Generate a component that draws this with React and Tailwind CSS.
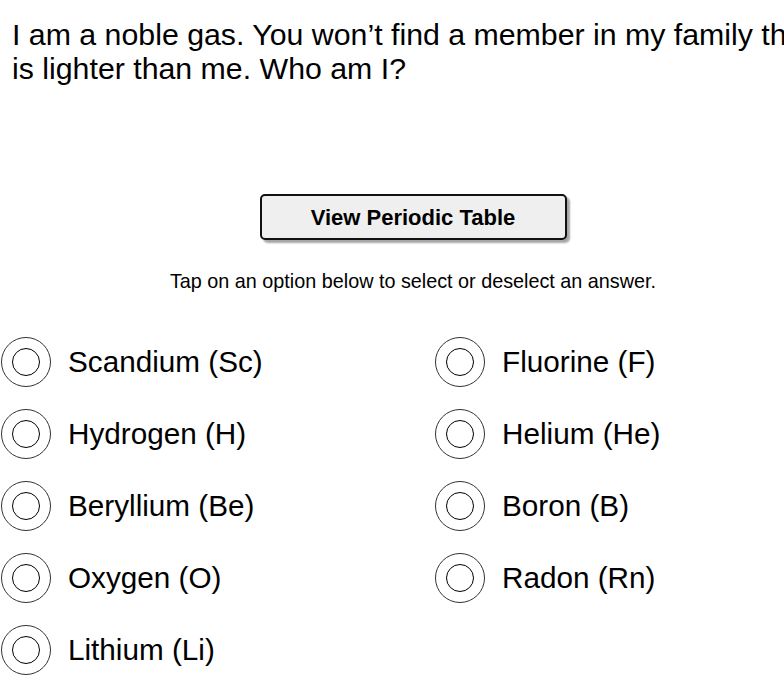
export default function App() {
  const left = ["Scandium (Sc)", "Hydrogen (H)", "Beryllium (Be)", "Oxygen (O)", "Lithium (Li)"];
  const right = ["Fluorine (F)", "Helium (He)", "Boron (B)", "Radon (Rn)"];
  const Option = ({ label }) => (
    <div className="flex items-center h-[72px]">
      <div className="w-[50px] h-[50px] rounded-full border border-[#333] flex items-center justify-center shrink-0 ml-px">
        <div className="w-[28px] h-[28px] rounded-full border-[1.5px] border-black" />
      </div>
      <span className="ml-[17px] text-[29.7px] leading-none text-black">{label}</span>
    </div>
  );
  return (
    <div className="w-[784px] h-[687px] overflow-hidden bg-white" style={{ fontFamily: '"Liberation Sans", Arial, sans-serif' }}>
      <div className="w-[880px]">
        <p className="pl-[12px] pt-[18px] text-[30.3px] leading-[34px] text-black w-[812px]">
          I am a noble gas. You won’t find a member in my family that is lighter than me. Who am I?
        </p>
      </div>
      <div className="w-[826px] flex flex-col items-center">
        <button className="mt-[108px] w-[307px] h-[46px] rounded-[5px] border-2 border-[#111] bg-[#efefef] shadow-[3px_3px_2px_rgba(0,0,0,0.35)] text-[22px] font-bold text-black">
          View Periodic Table
        </button>
        <p className="mt-[27px] text-[19.8px] text-black">Tap on an option below to select or deselect an answer.</p>
      </div>
      <div className="flex mt-[29px]">
        <div className="w-[434px] flex flex-col">
          {left.map((l) => <Option key={l} label={l} />)}
        </div>
        <div className="flex flex-col">
          {right.map((l) => <Option key={l} label={l} />)}
        </div>
      </div>
    </div>
  );
}
